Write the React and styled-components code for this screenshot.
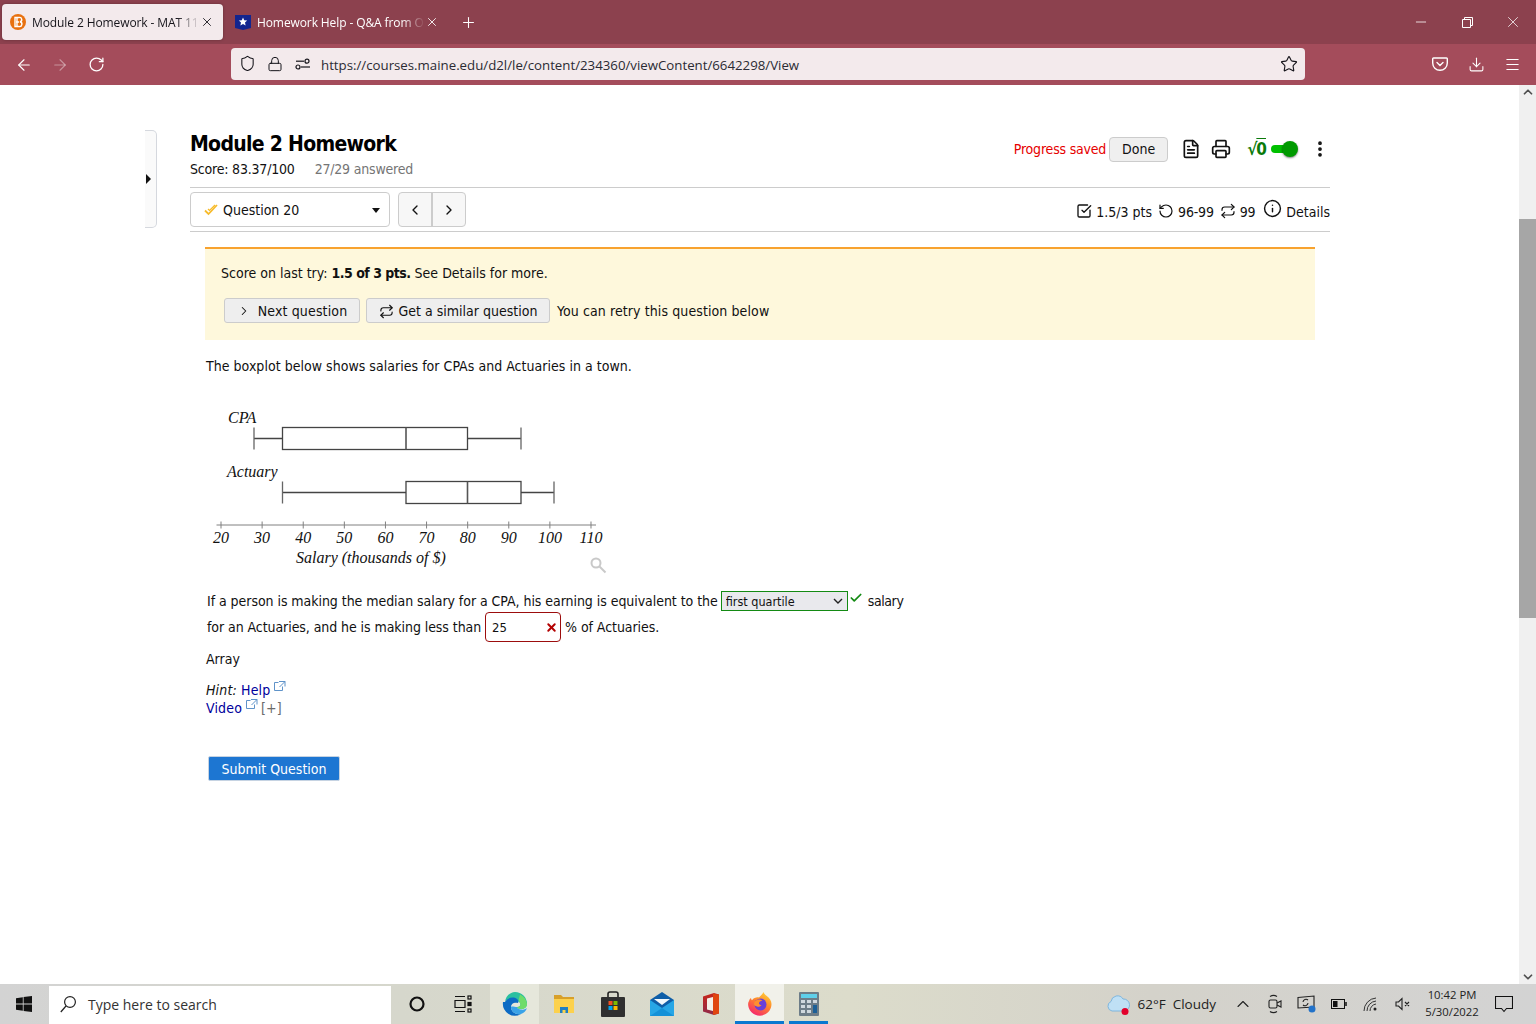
import React from 'react';
import styled, { createGlobalStyle } from 'styled-components';
import {
  ArrowLeft, ArrowRight, ChevronDown, ChevronLeft, ChevronRight, ChevronUp, Check, Download,
  EllipsisVertical, FileText, Info, Lock, Menu, Minus, Plus, Printer, Repeat, RotateCcw, RotateCw,
  Shield, SquareCheckBig, Star, X,
} from 'lucide-react';

const GlobalStyle = createGlobalStyle`
  html, body {
    margin: 0;
    height: 100%;
    overflow: hidden;
    background: #fff;
  }
  body {
    font-family: "DejaVu Sans Condensed", "DejaVu Sans", Verdana, sans-serif;
    font-stretch: condensed;
    color: #111;
  }
`;

const uiFont = '"Open Sans", "Noto Sans", sans-serif';
const pageFont = '"DejaVu Sans Condensed", "DejaVu Sans", Verdana, sans-serif';

const selectArrow = "url(\"data:image/svg+xml,%3Csvg xmlns='http://www.w3.org/2000/svg' width='10' height='6' fill='none' stroke='%23222' stroke-width='1.4'%3E%3Cpath d='M1 1l4 4 4-4'/%3E%3C/svg%3E\")";

const Screen = styled.div`
  width: 1536px;
  height: 1024px;
  display: flex;
  flex-direction: column;
  overflow: hidden;
`;

/* browser chrome */
const TabStrip = styled.div`
  height: 44px;
  background: #8c414e;
  display: flex;
  align-items: center;
  padding-left: 2px;
  font-family: ${uiFont};
  font-stretch: normal;
`;

const Tab = styled.div`
  width: ${p => p.$width}px;
  height: 36px;
  margin-right: ${p => p.$gap || 0}px;
  box-sizing: border-box;
  border-radius: 4px;
  display: flex;
  align-items: center;
  gap: 6px;
  padding-left: 8px;
  padding-right: ${p => p.$end}px;
  font-size: 12px;
  letter-spacing: -0.1px;
  color: ${p => (p.$active ? '#15141a' : '#fff')};
  background: ${p => (p.$active ? '#f3eaec' : 'transparent')};
  box-shadow: ${p => (p.$active ? '0 0 3px rgba(0,0,0,.3)' : 'none')};
`;

const TabTitle = styled.span`
  flex: 1;
  min-width: 0;
  margin-right: -6px;
  white-space: nowrap;
  mask-image: linear-gradient(to right, #000 86%, transparent 100%);
`;

const NewTab = styled.div`
  display: flex;
  margin-left: 15px;
  color: #fff;
`;

const WindowControls = styled.div`
  margin-left: auto;
  display: flex;
  height: 44px;
`;

const WindowButton = styled.div`
  width: 46px;
  display: flex;
  align-items: center;
  justify-content: center;
  color: #fff;
`;

const Toolbar = styled.div`
  height: 41px;
  background: #a44c5b;
  display: flex;
  align-items: center;
  font-family: ${uiFont};
  font-stretch: normal;
`;

const NavButton = styled.div`
  width: 36px;
  display: flex;
  justify-content: center;
  color: ${p => (p.$off ? 'rgba(255,255,255,.4)' : '#fff')};
`;

const NavGroup = styled.div`
  display: flex;
  padding-left: 6px;
  width: 231px;
  box-sizing: border-box;
`;

const UrlBar = styled.div`
  width: 1074px;
  height: 32px;
  background: #f3eaec;
  border-radius: 4px;
  display: flex;
  align-items: center;
  box-sizing: border-box;
  padding: 0 2px;
  color: #15141a;
  margin-top: -2px;
`;

const UrlIcon = styled.div`
  width: 28px;
  height: 18px;
  display: flex;
  justify-content: center;
  align-items: center;
`;

const UrlText = styled.div`
  flex: 1;
  font-size: 13.25px;
  color: #2b2a33;
  margin-left: 4px;
  padding-top: 2px;
`;

const ToolbarRight = styled.div`
  display: flex;
  margin-left: 117px;
`;

/* page body */
const Body = styled.div`
  flex: 1;
  display: flex;
  min-height: 0;
`;

const Page = styled.main`
  flex: 1;
  position: relative;
  padding: 45px 0 0 190px;
  font-size: 14px;
`;

const SideHandle = styled.div`
  position: absolute;
  left: 145px;
  top: 45px;
  width: 12px;
  height: 98px;
  box-sizing: border-box;
  border: 1px solid #d5d8de;
  border-left: none;
  border-radius: 0 5px 5px 0;
  background: #fafafa;
  display: flex;
  align-items: center;

  &::after {
    content: '';
    border-left: 5px solid #111;
    border-top: 5px solid transparent;
    border-bottom: 5px solid transparent;
    margin-left: 1px;
  }
`;

const Column = styled.div`
  width: 1140px;
`;

const HeaderRow = styled.div`
  display: flex;
  justify-content: space-between;
  height: 57px;
  border-bottom: 1px solid #ccc;
`;

const Title = styled.h1`
  margin: 0;
  font-size: 21px;
  line-height: 28px;
  font-weight: 700;
  letter-spacing: -0.7px;
  color: #000;
`;

const ScoreLine = styled.div`
  display: flex;
  gap: 20px;
  margin-top: 3px;
  line-height: 17px;
  letter-spacing: -0.2px;
`;

const Muted = styled.span`
  color: #757575;
`;

const HeaderTools = styled.div`
  display: flex;
  align-items: center;
  height: 38px;
`;

const Saved = styled.span`
  color: #e60000;
  margin-right: 3px;
  letter-spacing: -0.2px;
`;

const DoneButton = styled.button`
  width: 59px;
  height: 25px;
  border: 1px solid #ccc;
  border-radius: 4px;
  background: #efefef;
  color: #111;
  font: inherit;
  font-stretch: condensed;
  padding: 0;
  margin-right: 13px;
`;

const ToolIcon = styled.div`
  display: flex;
  margin-right: ${p => p.$gap || 0}px;
  color: #111;
`;

const Sqrt = styled.span`
  color: #0a7a0a;
  font-size: 17px;
  font-weight: 700;
  letter-spacing: -1px;
  margin-right: 5px;
  span { text-decoration: overline; }
`;

const Toggle = styled.div`
  position: relative;
  width: 26px;
  height: 8px;
  border-radius: 4px;
  background: #00c000;
  margin-right: 13px;

  &::after {
    content: '';
    position: absolute;
    right: -1px;
    top: -4px;
    width: 16px;
    height: 16px;
    border-radius: 50%;
    background: #009a00;
    box-shadow: 0 1px 2px rgba(0,0,0,.5);
  }
`;

const QuestionRow = styled.div`
  display: flex;
  align-items: center;
  height: 43px;
  border-bottom: 1px solid #ccc;
`;

const QuestionSelect = styled.div`
  width: 200px;
  height: 35px;
  box-sizing: border-box;
  border: 1px solid #ccc;
  border-radius: 4px;
  display: flex;
  align-items: center;
  padding: 1px 9px 0 13px;
  gap: 4px;
  margin-right: 8px;

  &::after {
    content: '';
    margin-left: auto;
    border-top: 5px solid #111;
    border-left: 4px solid transparent;
    border-right: 4px solid transparent;
  }
`;

const PagerGroup = styled.div`
  display: flex;
  height: 35px;
  width: 68px;
  box-sizing: border-box;
  border: 1px solid #ccc;
  border-radius: 4px;
  background: #f7f7f7;
`;

const PagerButton = styled.div`
  flex: 1;
  display: flex;
  align-items: center;
  justify-content: center;
  border-left: ${p => (p.$divider ? '2px solid #ccc' : 'none')};
`;

const Stats = styled.div`
  margin-left: auto;
  display: flex;
  align-items: center;
  margin-top: 4px;
`;

const Stat = styled.span`
  display: inline-flex;
  align-items: center;
  gap: 4px;
  margin-left: ${p => p.$gap || 0}px;
  letter-spacing: ${p => p.$tight || 0}px;

  svg { margin-top: ${p => p.$lift || -2}px; }
`;

const Content = styled.div`
  padding: 15px 0 0 15px;
  width: 1110px;
`;

const Banner = styled.div`
  height: 93px;
  box-sizing: border-box;
  background: #fef8dc;
  border-top: 2px solid #f8a22f;
  padding: 16px 16px 0;
`;

const BannerText = styled.div`
  line-height: 17px;

  strong { letter-spacing: -0.5px; }
`;

const BannerActions = styled.div`
  display: flex;
  align-items: center;
  margin-top: 16px;
  padding-left: 3px;
`;

const ActionButton = styled.button`
  height: 25px;
  width: ${p => p.$width}px;
  margin-right: 6px;
  box-sizing: border-box;
  border: 1px solid #ccc;
  border-radius: 3px;
  background: #eee;
  color: #111;
  font: inherit;
  font-stretch: condensed;
  letter-spacing: ${p => p.$spacing || 0}px;
  padding: 1px 0 0;
  display: flex;
  align-items: center;
  justify-content: center;
  gap: ${p => p.$gap || 5}px;
`;

const RetryNote = styled.span`
  margin-left: 1px;
  letter-spacing: 0.1px;
`;

const Paragraph = styled.p`
  margin: ${p => p.$top || 0}px 0 0 ${p => p.$left || 0}px;
  line-height: 17px;
  letter-spacing: ${p => p.$spacing || 0}px;
`;

const ChartWrap = styled.div`
  margin: 25px 0 0 -5px;
  height: 190px;

  svg { display: block; }
`;

const AnswerLine = styled.div`
  display: flex;
  align-items: center;
  height: ${p => p.$height}px;
  margin-left: 2px;
  white-space: pre;
  letter-spacing: ${p => p.$spacing}px;
`;

const AnswerSelect = styled.select`
  appearance: none;
  width: 127px;
  height: 20px;
  margin: 0 0 0 3px;
  box-sizing: border-box;
  border: 1px solid #138a13;
  border-radius: 0;
  background: #e9e9ed ${selectArrow} no-repeat right 4px center;
  color: #111;
  font-size: 12.5px;
  font-family: ${pageFont};
  font-stretch: condensed;
  padding: 0 0 0 4px;
`;

const InputBox = styled.div`
  position: relative;
  width: 76px;
  height: 30px;
  box-sizing: border-box;
  margin: 0 4px 0 4px;
  border: 1px solid #9c0d0d;
  border-radius: 4px;
  color: #b30000;
`;

const AnswerInput = styled.input`
  width: 50px;
  height: 28px;
  border: none;
  outline: none;
  background: transparent;
  padding: 0 0 0 6px;
  font-size: 13px;
  font-family: ${pageFont};
  font-stretch: condensed;
  color: #111;
`;

const InputMark = styled.span`
  position: absolute;
  right: 2px;
  top: 8px;
  display: flex;
`;

const CheckMark = styled.span`
  display: inline-flex;
  margin: -6px 5px 0 1px;
  color: #138a13;
`;

const SalaryWord = styled.span`
  letter-spacing: -0.4px;
`;

const HelpLine = styled.div`
  height: 18px;
  line-height: 17px;
  letter-spacing: 0.15px;
`;

const HelpLink = styled.a`
  color: #00009c;
  text-decoration: none;
`;

const Bracket = styled.span`
  color: #6b6b6b;
  margin-left: 3px;
`;

const Popout = styled.svg`
  width: 12px;
  height: 12px;
  margin-left: 4px;
  vertical-align: 3px;
  color: #5f93c9;
`;

const SubmitButton = styled.button`
  display: block;
  margin: 40px 0 0 3px;
  width: 132px;
  height: 25px;
  box-sizing: border-box;
  border: 1px solid #c6d3e2;
  border-radius: 2px;
  background: #1d76d2;
  color: #fff;
  font: inherit;
  font-stretch: condensed;
  padding: 1px 0 0;
`;

const ScrollBar = styled.div`
  width: 17px;
  background: #f0f0f0;
  display: flex;
  flex-direction: column;
  align-items: center;
  color: #505050;
  box-sizing: border-box;
`;

const ScrollThumb = styled.div`
  width: 17px;
  height: 399px;
  margin-top: 120px;
  margin-bottom: auto;
  background: #a6a6a6;
`;

/* windows taskbar */
const TaskBar = styled.footer`
  height: 40px;
  display: flex;
  align-items: center;
  background: linear-gradient(to right, #d3d3d3 0, #d6d7cc 400px, #dcdccb 850px, #d4d2ca 1150px, #d3d3d3 1536px);
  font-family: ${uiFont};
  font-stretch: normal;
  color: #111;
`;

const StartButton = styled.div`
  width: 49px;
  box-sizing: border-box;
  padding-right: 1px;
  display: flex;
  justify-content: center;
`;

const SearchBox = styled.div`
  width: 342px;
  height: 38px;
  margin: 1px 1px 0 0;
  box-sizing: border-box;
  background: #fff;
  display: flex;
  align-items: center;
  padding-left: 11px;
  gap: 12px;
  font-size: 14px;
  color: #333;
`;

const TaskItem = styled.div`
  position: relative;
  width: 49px;
  height: 40px;
  display: flex;
  align-items: center;
  justify-content: center;
  background: ${p => (p.$active ? '#f1f1ea' : p.$hover ? '#e6e7db' : 'transparent')};

  &::after {
    content: ${p => (p.$running ? "''" : 'none')};
    position: absolute;
    left: ${p => p.$inset || 0}px;
    right: ${p => p.$inset || 0}px;
    bottom: 0;
    height: 3px;
    background: #0a78d0;
  }
`;

const Weather = styled.div`
  margin-left: auto;
  display: flex;
  align-items: center;
  font-size: 13.5px;
  gap: 7px;
  color: #222;
  margin-right: 11px;
`;

const TrayItem = styled.div`
  width: 32px;
  display: flex;
  justify-content: center;
  color: #222;
`;

const Clock = styled.div`
  width: 64px;
  margin-left: 1px;
  padding-bottom: 2px;
  text-align: center;
  font-size: 11.3px;
  line-height: 17.5px;
  color: #222;
`;

const Notify = styled.div`
  width: 52px;
  display: flex;
  justify-content: center;
  padding-right: 12px;
  box-sizing: border-box;
`;

const D2lIcon = () => (
  <svg width="16" height="16" viewBox="0 0 16 16">
    <circle cx="8" cy="8" r="8" fill="#e8710f" />
    <path d="M5 3.5h4a2.2 2.2 0 0 1 1 4.3 2.4 2.4 0 0 1-1 4.7H5zM7 3.5v9M6 8h3" fill="none" stroke="#fff" strokeWidth="1.4" />
  </svg>
);

const CheggIcon = () => (
  <svg width="16" height="16" viewBox="0 0 16 16">
    <path d="M0 1h16v13l-8 2-8-2z" fill="#12258f" />
    <path d="M8 3.6l1.2 2.7 3 .3-2.2 2 .6 2.9L8 10l-2.6 1.5.6-2.9-2.2-2 3-.3z" fill="#fff" />
  </svg>
);

const PermIcon = () => (
  <svg width="16" height="12" viewBox="0 0 16 12" fill="none" stroke="#15141a" strokeWidth="1.2">
    <path d="M1 3.2h8" />
    <circle cx="12" cy="3.2" r="2" />
    <circle cx="3" cy="9" r="2" />
    <path d="M6 9h9" />
  </svg>
);

const RestoreIcon = () => (
  <svg width="11" height="11" viewBox="0 0 11 11" fill="none" stroke="#fff">
    <path d="M.5 2.5h8v8h-8zM2.5 2.5v-2h8v8h-2" />
  </svg>
);

const PocketIcon = () => (
  <svg width="16" height="16" viewBox="0 0 16 16" fill="none" stroke="#fff" strokeWidth="1.4">
    <path d="M1.5 2h13a.8.8 0 0 1 .8.8V7a7.3 7.3 0 0 1-14.6 0V2.8a.8.8 0 0 1 .8-.8z" />
    <path d="M5 6.5l3 3 3-3" strokeLinecap="round" />
  </svg>
);

const DoubleCheck = () => (
  <svg width="15" height="12" viewBox="0 0 15 12" fill="none" stroke="#f7bb2b" strokeWidth="1.8">
    <path d="M1 6.5L4.500 10 13 1" />
    <path d="M4 5l1.500 1.500L11 1" strokeWidth="1.2" />
  </svg>
);

const PopoutIcon = () => (
  <Popout viewBox="0 0 12 12" fill="none" stroke="currentColor">
    <path d="M8.5 6.5v4h-8v-8h4" />
    <path d="M5 1.5h6v5M11 1.5L5.500 7" />
  </Popout>
);

const BoxRow = ({ y, min, q1, med, q3, max }) => (
  <g fill="none" stroke="#444" strokeWidth="1.3">
    <path d={`M${min} ${y + 11}H${q1}M${q3} ${y + 11}H${max}`} />
    <path d={`M${min} ${y}v22M${max} ${y}v22`} stroke="#666" />
    <rect x={q1} y={y} width={q3 - q1} height={22} />
    <path d={`M${med} ${y}v22`} stroke="#555" strokeWidth="1.6" />
  </g>
);

const axisLabels = [20, 30, 40, 50, 60, 70, 80, 90, 100, 110];
const tickX = v => 221 + (v - 20) * 4.111;

const serifItalic = {
  fontFamily: '"Liberation Serif", "Times New Roman", serif',
  fontStyle: 'italic',
  fontStretch: 'normal',
  fontSize: 16,
  fill: '#111',
};

const BoxPlot = () => (
  <svg width="420" height="180" viewBox="200 400 420 180" role="img">
    <text x="228" y="422.5" {...serifItalic}>CPA</text>
    <BoxRow y={427.5} min={254} q1={282.5} med={406} q3={467.5} max={521} />
    <text x="227" y="476.5" {...serifItalic}>Actuary</text>
    <BoxRow y={481.5} min={282.5} q1={406} med={467.5} q3={521} max={554} />
    <g stroke="#808080" strokeWidth="1">
      <path d="M216.5 525H596" />
      {axisLabels.map(v => (
        <path key={v} d={`M${tickX(v)} 521.5v7`} />
      ))}
    </g>
    {axisLabels.map(v => (
      <text key={v} x={tickX(v)} y="543" textAnchor="middle" {...serifItalic}>{v}</text>
    ))}
    <text x="296" y="563" {...serifItalic}>Salary (thousands of $)</text>
    <g fill="none" stroke="#c9c9c9" strokeWidth="2">
      <circle cx="596" cy="563" r="4.5" />
      <path d="M599.5 566.5l6 6" />
    </g>
  </svg>
);

const WindowsLogo = () => (
  <svg width="16" height="16" viewBox="0 0 16 16" fill="#111">
    <path d="M0 2.2l6.800-1v6.400H0zM7.600 1.100L16 0v7.600H7.600zM0 8.400h6.800v6.400l-6.800-1zM7.600 8.400H16V16l-8.400-1.100z" />
  </svg>
);

const SearchGlass = () => (
  <svg width="16" height="17" viewBox="0 0 16 17" fill="none" stroke="#222" strokeWidth="1.2">
    <circle cx="10" cy="6" r="5.4" />
    <path d="M6 10L.8 16" />
  </svg>
);

const TaskViewIcon = () => (
  <svg width="23" height="18" viewBox="0 0 23 18" fill="none" stroke="#111" strokeWidth="1.2">
    <path d="M1 1.5h10M1 16.5h10M1 5.5h10v7H1z" />
    <rect x="14" y="1" width="3" height="3" />
    <rect x="14" y="7.5" width="3" height="3" fill="#111" />
    <rect x="14" y="14" width="3" height="3" />
  </svg>
);

const EdgeIcon = () => (
  <svg width="26" height="26" viewBox="0 0 26 26">
    <path d="M13 1a12 12 0 0 1 12 12c0 3-2.5 5-6 5-2.500 0-4-1-4-2 3 0 4-2 3-4-1.500-2.500-6-3-9-1C5 7 4 9 3 11 3.500 5.500 8 1 13 1z" fill="#2bc0a0" />
    <path d="M18 3.500A12 12 0 0 1 25 13c0 3-2.500 5-6 5-2.500 0-4-1-4-2 3 0 4-2 3-4-.5-1-1-2-1.500-2.500z" fill="#6fdc6a" />
    <path d="M3 11c2-4 8-6 12-3 1 1 2 2 1 4-3-1-7 0-7 4 0 4 3.500 8 10 7a12 12 0 0 1-18-12z" fill="#0c6bc4" />
    <path d="M9 16c0 4 3.500 8 10 7 3-1 5-3 6-6-1 1-3 2-6 1.500-2-.3-4-1-4-2.500-2 0-6-1-6 0z" fill="#3aa3e8" />
  </svg>
);

const FolderIcon = () => (
  <svg width="22" height="20" viewBox="0 0 22 20">
    <path d="M1 1h7l2 2h11v3H1z" fill="#d8a02a" />
    <path d="M1 5h20v14H1z" fill="#fcd14d" />
    <path d="M7 19v-6h8v6h-2.500v-3h-3v3z" fill="#1f7fc4" />
  </svg>
);

const StoreIcon = () => (
  <svg width="24" height="26" viewBox="0 0 24 26">
    <path d="M7 8V3a2 2 0 0 1 2-2h6a2 2 0 0 1 2 2v5" fill="none" stroke="#222" strokeWidth="1.6" />
    <rect x="0" y="6" width="24" height="20" rx="1" fill="#2f2f2f" />
    <rect x="7.5" y="10" width="4" height="4" fill="#f25022" />
    <rect x="12.5" y="10" width="4" height="4" fill="#7fba00" />
    <rect x="7.5" y="15" width="4" height="4" fill="#00a4ef" />
    <rect x="12.5" y="15" width="4" height="4" fill="#ffb900" />
  </svg>
);

const MailIcon = () => (
  <svg width="24" height="24" viewBox="0 0 24 24">
    <path d="M0 8L12 0l12 8v16H0z" fill="#0f5ea8" />
    <path d="M4 7h16l-8 6z" fill="#f2f8fc" />
    <path d="M0 8l12 8 12-8v16H0z" fill="#27a6e6" />
    <path d="M0 24l12-8 12 8z" fill="#1491d8" />
  </svg>
);

const OfficeIcon = () => (
  <svg width="18" height="24" viewBox="0 0 18 24">
    <defs>
      <linearGradient id="officeLeft" x1="0" y1="0" x2="0" y2="1">
        <stop offset="0" stopColor="#c8261a" />
        <stop offset="1" stopColor="#8f2a4a" />
      </linearGradient>
    </defs>
    <path d="M1 4.5L12 1l5 1.500v19L12 23 1 19.500z" fill="url(#officeLeft)" />
    <path d="M11 2l6 .5v19L11 23z" fill="#e0450f" />
    <path d="M5 6.500l6-1.500v14l-6-1.500z" fill="#f4efe8" />
  </svg>
);

const FirefoxIcon = () => (
  <svg width="24" height="24" viewBox="0 0 24 24">
    <defs>
      <linearGradient id="foxRing" x1="0.85" y1="0" x2="0.3" y2="1">
        <stop offset="0" stopColor="#ffd53a" />
        <stop offset="0.45" stopColor="#ff8a2a" />
        <stop offset="1" stopColor="#f5256f" />
      </linearGradient>
    </defs>
    <path d="M1 9c.5-1.500 1.200-2.600 2-3 0 1 .3 1.700 1 2.200C6 5.500 9 5 11 5.500 13 3.500 14.500 2 15.500 0c.5 1.600 1.500 2.800 3 3.800 3 2.200 5 5 5 8.200a11.700 11.700 0 0 1-23.400 0c0-1 .3-2 .9-3z" fill="url(#foxRing)" />
    <circle cx="12.5" cy="12.5" r="6" fill="#6a3fd8" />
    <path d="M6 12c0-2 1.500-4 4-4.500 2-.4 3.500.2 4.500 1.300-2 .2-3.500 1-3.500 2.400 0 1 1 1.800 2.500 1.800-1 1.500-3 2.200-4.500 1.500C7.500 14 6 13.500 6 12z" fill="#ff8f2f" />
  </svg>
);

const CalculatorIcon = () => (
  <svg width="20" height="24" viewBox="0 0 20 24">
    <rect width="20" height="24" rx="1" fill="#6d7d88" />
    <rect x="2" y="2" width="16" height="4" fill="#5fd0ea" />
    <g fill="#cfd8de">
      <rect x="2" y="8" width="4" height="3" />
      <rect x="8" y="8" width="4" height="3" />
      <rect x="2" y="13" width="4" height="3" />
      <rect x="8" y="13" width="4" height="3" />
      <rect x="2" y="18" width="4" height="3" />
      <rect x="8" y="18" width="4" height="3" />
    </g>
    <rect x="14" y="8" width="4" height="3" fill="#cfd8de" />
    <rect x="14" y="13" width="4" height="8" fill="#1c5f96" />
  </svg>
);

const CloudIcon = () => (
  <svg width="24" height="23" viewBox="0 0 24 23">
    <path d="M6 18a5 5 0 0 1-1-9.500A6.500 6.500 0 0 1 17 6a5.500 5.500 0 0 1 1 12z" fill="#bfe0f5" stroke="#7fb6dd" />
    <circle cx="19" cy="18.5" r="3.5" fill="#e2002b" />
  </svg>
);

const WebcamIcon = () => (
  <svg width="16" height="20" viewBox="0 0 16 20" fill="none" stroke="#222" strokeWidth="1.1">
    <rect x="2" y="6" width="8" height="8" rx="1.5" />
    <path d="M10 9l4-2v6l-4-2M3 2.500c2-1.300 5-1.300 7 0M3 17.500c2 1.300 5 1.300 7 0" />
  </svg>
);

const RemoteIcon = () => (
  <svg width="20" height="20" viewBox="0 0 20 20" fill="none" stroke="#222" strokeWidth="1.1">
    <path d="M1 3.500L17 2v11L1 14z" />
    <path d="M6 8a3 3 0 0 1 5-2M11 9a3 3 0 0 1-5 2" />
    <circle cx="15" cy="15" r="3.5" fill="#2272c9" stroke="none" />
  </svg>
);

const BatteryIcon = () => (
  <svg width="16" height="10" viewBox="0 0 16 10" fill="none" stroke="#111">
    <rect x=".5" y=".5" width="13" height="9" />
    <rect x="2" y="2" width="4.5" height="6" fill="#111" stroke="none" />
    <path d="M15 3v4" strokeWidth="1.5" />
  </svg>
);

const WifiIcon = () => (
  <svg width="16" height="16" viewBox="0 0 16 16" fill="none" stroke="#333">
    <path d="M1 15A13 13 0 0 1 13 2M4 15a10 10 0 0 1 9-10M7 15a7 7 0 0 1 6-7" />
    <circle cx="12" cy="13" r="1.5" fill="#222" stroke="none" />
  </svg>
);

const MutedIcon = () => (
  <svg width="16" height="14" viewBox="0 0 16 14" fill="none" stroke="#222" strokeWidth="1.1">
    <path d="M1 5v4h2.500L7 12.500v-11L3.500 5zM10 5l4 4M14 5l-4 4" />
  </svg>
);

const NotifyIcon = () => (
  <svg width="18" height="17" viewBox="0 0 18 17" fill="none" stroke="#111" strokeWidth="1.1">
    <path d="M.5.500h17v12h-6L9 15.500 6.500 12.500h-6z" />
  </svg>
);

export default function App() {
  return (
    <Screen>
      <GlobalStyle />
      <TabStrip>
        <Tab $active $width={221} $gap={4} $end={9}>
          <D2lIcon />
          <TabTitle>Module 2 Homework - MAT 115</TabTitle>
          <X size={14} strokeWidth={1.5} />
        </Tab>
        <Tab $width={218} $end={6}>
          <CheggIcon />
          <TabTitle>Homework Help - Q&amp;A from O</TabTitle>
          <X size={14} strokeWidth={1.5} />
        </Tab>
        <NewTab><Plus size={17} strokeWidth={1.5} /></NewTab>
        <WindowControls>
          <WindowButton><Minus size={16} strokeWidth={1.2} /></WindowButton>
          <WindowButton><RestoreIcon /></WindowButton>
          <WindowButton><X size={18} strokeWidth={1} /></WindowButton>
        </WindowControls>
      </TabStrip>

      <Toolbar>
        <NavGroup>
          <NavButton><ArrowLeft size={18} strokeWidth={1.5} /></NavButton>
          <NavButton $off><ArrowRight size={18} strokeWidth={1.5} /></NavButton>
          <NavButton><RotateCw size={17} strokeWidth={1.8} /></NavButton>
        </NavGroup>
        <UrlBar>
          <UrlIcon><Shield size={17} strokeWidth={1.5} /></UrlIcon>
          <UrlIcon><Lock size={16} strokeWidth={1.5} /></UrlIcon>
          <UrlIcon><PermIcon /></UrlIcon>
          <UrlText>https://courses.maine.edu/d2l/le/content/234360/viewContent/6642298/View</UrlText>
          <UrlIcon><Star size={18} strokeWidth={1.5} /></UrlIcon>
        </UrlBar>
        <ToolbarRight>
          <NavButton><PocketIcon /></NavButton>
          <NavButton><Download size={17} strokeWidth={1.5} /></NavButton>
          <NavButton><Menu size={17} strokeWidth={1.5} /></NavButton>
        </ToolbarRight>
      </Toolbar>

      <Body>
        <Page>
          <SideHandle />
          <Column>
            <HeaderRow>
              <div>
                <Title>Module 2 Homework</Title>
                <ScoreLine>
                  <span>Score: 83.37/100</span>
                  <Muted>27/29 answered</Muted>
                </ScoreLine>
              </div>
              <HeaderTools>
                <Saved>Progress saved</Saved>
                <DoneButton>Done</DoneButton>
                <ToolIcon $gap={10}><FileText size={20} strokeWidth={2} /></ToolIcon>
                <ToolIcon $gap={16}><Printer size={20} strokeWidth={2} /></ToolIcon>
                <Sqrt>√<span>0</span></Sqrt>
                <Toggle />
                <ToolIcon><EllipsisVertical size={20} strokeWidth={2.5} /></ToolIcon>
              </HeaderTools>
            </HeaderRow>

            <QuestionRow>
              <QuestionSelect>
                <DoubleCheck />
                <span>Question 20</span>
              </QuestionSelect>
              <PagerGroup>
                <PagerButton><ChevronLeft size={16} strokeWidth={2} /></PagerButton>
                <PagerButton $divider><ChevronRight size={16} strokeWidth={2} /></PagerButton>
              </PagerGroup>
              <Stats>
                <Stat><SquareCheckBig size={16} strokeWidth={2} />1.5/3 pts</Stat>
                <Stat $gap={6} $tight={-0.2}><RotateCcw size={16} strokeWidth={1.8} />96-99</Stat>
                <Stat $gap={6} $tight={-0.2}><Repeat size={16} strokeWidth={1.8} />99</Stat>
                <Stat $gap={8} $lift={-6}><Info size={19} strokeWidth={1.8} />Details</Stat>
              </Stats>
            </QuestionRow>

            <Content>
              <Banner>
                <BannerText>
                  Score on last try: <strong>1.5 of 3 pts.</strong> See Details for more.
                </BannerText>
                <BannerActions>
                  <ActionButton $width={136} $gap={7} $spacing={0.15}>
                    <ChevronRight size={14} strokeWidth={1.8} />
                    Next question
                  </ActionButton>
                  <ActionButton $width={184}>
                    <Repeat size={15} strokeWidth={1.8} />
                    Get a similar question
                  </ActionButton>
                  <RetryNote>You can retry this question below</RetryNote>
                </BannerActions>
              </Banner>

              <Paragraph $top={18} $left={1} $spacing={0.03}>The boxplot below shows salaries for CPAs and Actuaries in a town.</Paragraph>

              <ChartWrap><BoxPlot /></ChartWrap>

              <AnswerLine $height={22} $spacing={-0.05}>
                If a person is making the median salary for a CPA, his earning is equivalent to the
                <AnswerSelect defaultValue="first">
                  <option value="first">first quartile</option>
                  <option value="median">median</option>
                  <option value="third">third quartile</option>
                </AnswerSelect>
                <CheckMark><Check size={14} strokeWidth={3} /></CheckMark>
                <SalaryWord>salary</SalaryWord>
              </AnswerLine>
              <AnswerLine $height={30} $spacing={-0.07}>
                for an Actuaries, and he is making less than
                <InputBox>
                  <AnswerInput defaultValue="25" readOnly />
                  <InputMark><X size={13} strokeWidth={3.5} /></InputMark>
                </InputBox>
                % of Actuaries.
              </AnswerLine>

              <Paragraph $top={9} $left={1}>Array</Paragraph>

              <Paragraph $top={12} $left={1} as="div">
                <HelpLine><em>Hint:</em> <HelpLink href="#help">Help</HelpLink><PopoutIcon /></HelpLine>
                <HelpLine>
                  <HelpLink href="#video">Video</HelpLink><PopoutIcon /><Bracket>[+]</Bracket>
                </HelpLine>
              </Paragraph>

              <SubmitButton>Submit Question</SubmitButton>
            </Content>
          </Column>
        </Page>
        <ScrollBar>
          <ChevronUp size={14} strokeWidth={3} />
          <ScrollThumb />
          <ChevronDown size={14} strokeWidth={3} />
        </ScrollBar>
      </Body>

      <TaskBar>
        <StartButton><WindowsLogo /></StartButton>
        <SearchBox>
          <SearchGlass />
          Type here to search
        </SearchBox>
        <TaskItem>
          <svg width="16" height="16" viewBox="0 0 16 16" fill="none" stroke="#111" strokeWidth="2.2">
            <circle cx="8" cy="8" r="6.5" />
          </svg>
        </TaskItem>
        <TaskItem><TaskViewIcon /></TaskItem>
        <TaskItem $hover><EdgeIcon /></TaskItem>
        <TaskItem><FolderIcon /></TaskItem>
        <TaskItem><StoreIcon /></TaskItem>
        <TaskItem><MailIcon /></TaskItem>
        <TaskItem><OfficeIcon /></TaskItem>
        <TaskItem $active $running><FirefoxIcon /></TaskItem>
        <TaskItem $running $inset={5}><CalculatorIcon /></TaskItem>
        <Weather>
          <CloudIcon />
          <span>62°F&nbsp; Cloudy</span>
        </Weather>
        <TrayItem><ChevronUp size={20} strokeWidth={1.3} /></TrayItem>
        <TrayItem><WebcamIcon /></TrayItem>
        <TrayItem><RemoteIcon /></TrayItem>
        <TrayItem><BatteryIcon /></TrayItem>
        <TrayItem><WifiIcon /></TrayItem>
        <TrayItem><MutedIcon /></TrayItem>
        <Clock>10:42 PM<br />5/30/2022</Clock>
        <Notify><NotifyIcon /></Notify>
      </TaskBar>
    </Screen>
  );
}
